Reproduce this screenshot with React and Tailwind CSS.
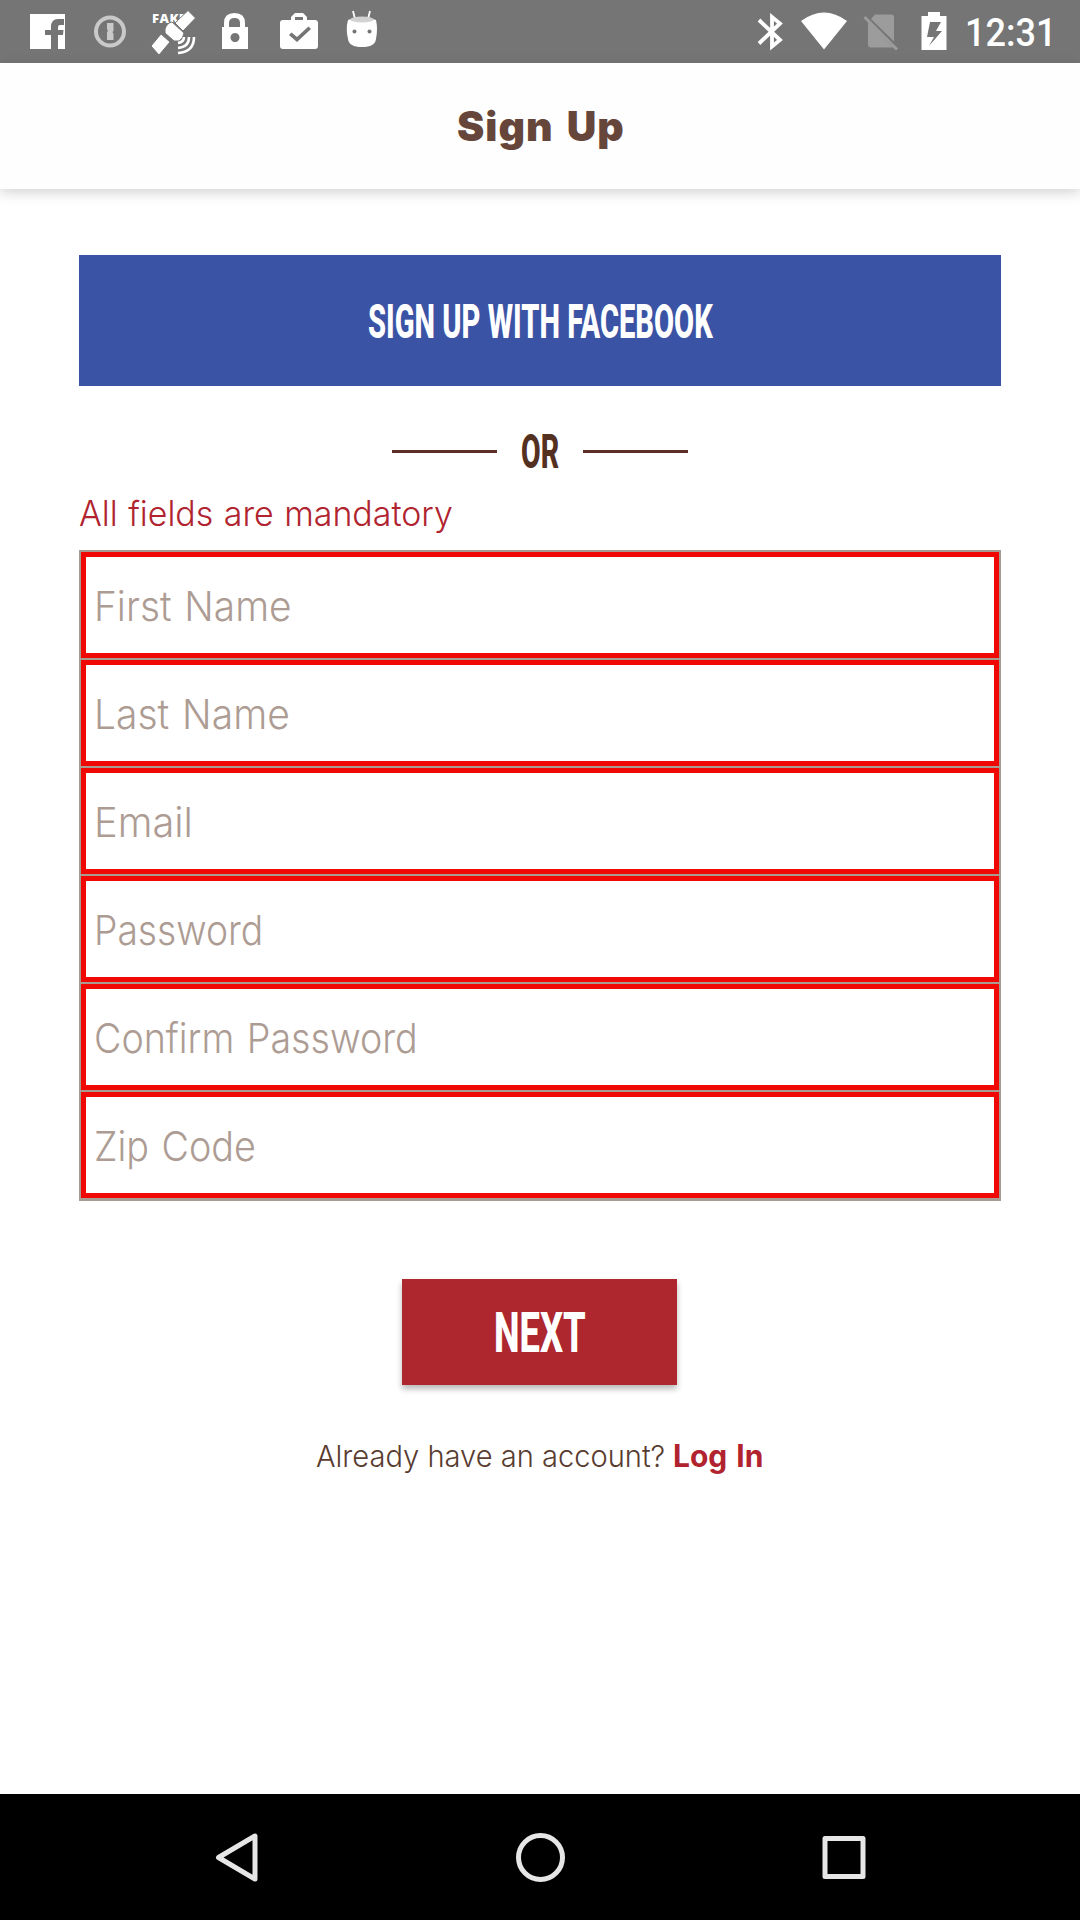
import { useLayoutEffect, useRef, useState } from "react";

// Single line of text stretched horizontally to fill the width of its box.
function FitText({ className = "", textClass = "", children }) {
  const box = useRef(null);
  const text = useRef(null);
  const [scale, setScale] = useState(1);
  useLayoutEffect(() => {
    setScale(box.current.clientWidth / text.current.offsetWidth);
  }, [children]);
  return (
    <div ref={box} className={`shrink-0 ${className}`}>
      <span
        ref={text}
        className={`inline-block origin-left whitespace-nowrap ${textClass}`}
        style={{ transform: `scaleX(${scale})` }}
      >
        {children}
      </span>
    </div>
  );
}

function Slot({ width, children }) {
  return (
    <svg className={width === 63 ? "h-[63px] w-[63px] shrink-0" : "h-[63px] w-[55px] shrink-0"} viewBox={`0 0 ${width} 63`} fill="none">
      {children}
    </svg>
  );
}

function StatusBar() {
  return (
    <div className="flex h-[63px] shrink-0 items-center justify-between bg-[#757575]">
      <div className="flex pl-4">
        <Slot width={63}>
          <path fill="#fff" d="M14 14h35v35H42V35h5l.500-5H42v-3q0-2 2-2h4v-6h-6q-7 0-7 8v3h-6v5h6v14H14z" />
        </Slot>
        <Slot width={63}>
          <circle cx="31" cy="31.500" r="14" stroke="#c9c9c9" strokeWidth="4" />
          <path fill="#c9c9c9" d="M28 23h6.500v8l-1 1 1 2v6H28v-8l1-1-1-2z" />
        </Slot>
        <Slot width={63}>
          <text x="10" y="23" fill="#fff" className="font-['Open_Sans'] text-[13px] font-extrabold" textLength="34">FAKE</text>
          <path fill="#fff" stroke="#757575" strokeWidth="1" d="M46 10.500 53.500 18 41 31 33 23zM9 46 19 34 28 42 17 55z" />
          <path fill="#fff" stroke="#757575" strokeWidth="1" d="M23 29q2-6 7-7l12 11q-1 6-5 8h-5l-9-8z" />
          <path stroke="#fff" strokeWidth="2.600" d="M36 43q6-1 6-6M36 48q11-1 11-11M36 53q16-1 16-16" />
        </Slot>
        <Slot width={63}>
          <path stroke="#fff" strokeWidth="5" d="M21.500 29v-6q0-7.500 8-7.500t8 7.500v6" />
          <path fill="#fff" fillRule="evenodd" d="M17 27h26v22H17zM30 33a4.500 4.500 0 1 0 .01 0z" />
        </Slot>
        <Slot width={63}>
          <path fill="#fff" fillRule="evenodd" d="M15 20h8v-3l4-4h8l4 4v3h8q3 0 3 3v23q0 3-3 3H15q-3 0-3-3V23q0-3 3-3zM27 20h8v-3h-8zM21 35l8 7 14-13-2.500-2.500L29 37l-5.500-4.500z" />
        </Slot>
        <Slot width={63}>
          <path stroke="#fff" strokeWidth="1.800" d="m22 11 2 8m15-8-2 8" />
          <path fill="#fff" d="M17 20q14-6 28 0 2 9 0 19-1 8-14 8t-14-8q-2.500-10 0-19z" />
          <ellipse cx="31" cy="19.500" rx="12" ry="3" fill="#d2d2d2" />
          <circle cx="23.500" cy="31.500" r="2" fill="#757575" />
          <circle cx="38.500" cy="31.500" r="2" fill="#757575" />
        </Slot>
      </div>
      <div className="flex items-center pr-6">
        <Slot width={55}>
          <path stroke="#fff" strokeWidth="3.800" d="M17 20 38 40 30 46.500V17l8 6.500L17 43.500" />
        </Slot>
        <Slot width={55}>
          <path fill="#fff" d="M4 21q23-17 46 0L27 49.500z" />
        </Slot>
        <Slot width={55}>
          <path fill="#9c9c9c" d="M23 14.500h16q3 0 3 3v24L19 19zM16 22 41 47.500H19q-3 0-3-3z" />
          <path stroke="#9c9c9c" strokeWidth="3" d="M12.500 17 45 49.500" />
        </Slot>
        <Slot width={55}>
          <path fill="#fff" fillRule="evenodd" d="M14.500 16H21v-4h12v4h6.500v34h-25zM23 22l-3 15h7l-5 9 13-15h-6l5-9z" />
        </Slot>
        <FitText className="ml-[3px] w-[91px] pt-0.5" textClass="font-['Roboto'] text-[38px] leading-[64px] font-medium text-white">
          12:31
        </FitText>
      </div>
    </div>
  );
}

const fields = [
  { label: "First Name", width: "w-[198px]" },
  { label: "Last Name", width: "w-[196px]" },
  { label: "Email", width: "w-[99px]" },
  { label: "Password", width: "w-[169px]" },
  { label: "Confirm Password", width: "w-[324px]" },
  { label: "Zip Code", width: "w-[162px]" },
];

export default function App() {
  return (
    <div className="flex h-[1920px] w-[1080px] flex-col overflow-hidden bg-white font-['Inter',sans-serif]">
      <StatusBar />
      <header className="flex h-[126px] shrink-0 justify-center bg-[#fefefe] shadow-[0_4px_12px_rgba(0,0,0,0.17)]">
        <FitText className="w-[168px] pl-px" textClass="text-[41px] leading-[127px] font-black tracking-[1px] [word-spacing:4px] text-[#66463a]">
          Sign Up
        </FitText>
      </header>

      <main className="flex grow flex-col items-center px-[79px] pt-[66px]">
        <button className="flex h-[131px] w-full shrink-0 justify-center bg-[#3a53a5]">
          <FitText className="w-[345px] text-left" textClass="font-['Roboto'] text-[48px] leading-[133px] font-extrabold text-white">
            SIGN UP WITH FACEBOOK
          </FitText>
        </button>

        <div className="mt-[34px] flex h-[64px] shrink-0 items-center justify-center">
          <span className="-mt-px h-[3px] w-[105px] bg-[#5c2f27]" />
          <FitText className="mr-[24px] ml-[24px] w-[38px]" textClass="font-['Roboto'] text-[48px] leading-[66px] font-extrabold text-[#53301f]">
            OR
          </FitText>
          <span className="-mt-px h-[3px] w-[105px] bg-[#5c2f27]" />
        </div>

        <FitText className="mt-[5px] h-[61px] w-[374px] self-start" textClass="text-[35px] leading-[48px] font-[350] [word-spacing:1px] text-[#b0232f]">
          All fields are mandatory
        </FitText>

        <div className="flex w-full shrink-0 flex-col gap-[2px] bg-[#a89c92] px-[2px] pt-[2px] pb-[3px]">
          {fields.map(({ label, width }) => (
            <div key={label} className="flex h-[106px] border-[5px] border-[#f00805] bg-white pl-[8px]">
              <FitText className={width} textClass="text-[41px] leading-[99px] font-[350] [word-spacing:2px] text-[#ad9c93]">
                {label}
              </FitText>
            </div>
          ))}
        </div>

        <button className="mt-[78px] mr-px flex h-[106px] w-[275px] shrink-0 justify-center bg-[#ae262e] shadow-[0_4px_6px_rgba(0,0,0,0.28)]">
          <FitText className="w-[92px] text-left" textClass="font-['Roboto'] text-[56px] leading-[109px] font-extrabold text-white">NEXT</FitText>
        </button>

        <div className="mt-[47px] flex w-full pl-[237px] leading-[48px]">
          <FitText className="w-[349px]" textClass="text-[30px] font-[350] text-[#593c30]">Already have an account?</FitText>
          <FitText className="ml-[8px] w-[90px]" textClass="text-[31px] font-bold [word-spacing:2px] text-[#b0232f]">Log In</FitText>
        </div>
      </main>

      <nav className="flex h-[126px] shrink-0 items-center justify-between bg-black px-[210px]">
        <svg className="h-[54px] w-[54px]" viewBox="0 0 54 54" fill="none" stroke="#e6e6e6" strokeWidth="5" strokeLinejoin="round">
          <path d="M45 6v43L8.500 27.500z" />
        </svg>
        <svg className="h-[54px] w-[54px]" viewBox="0 0 54 54" fill="none" stroke="#e6e6e6" strokeWidth="5">
          <circle cx="27.500" cy="27.500" r="22" />
        </svg>
        <svg className="h-[54px] w-[54px]" viewBox="0 0 54 54" fill="none" stroke="#e6e6e6" strokeWidth="5" strokeLinejoin="round">
          <rect x="9" y="8.500" width="38" height="38" />
        </svg>
      </nav>
    </div>
  );
}
